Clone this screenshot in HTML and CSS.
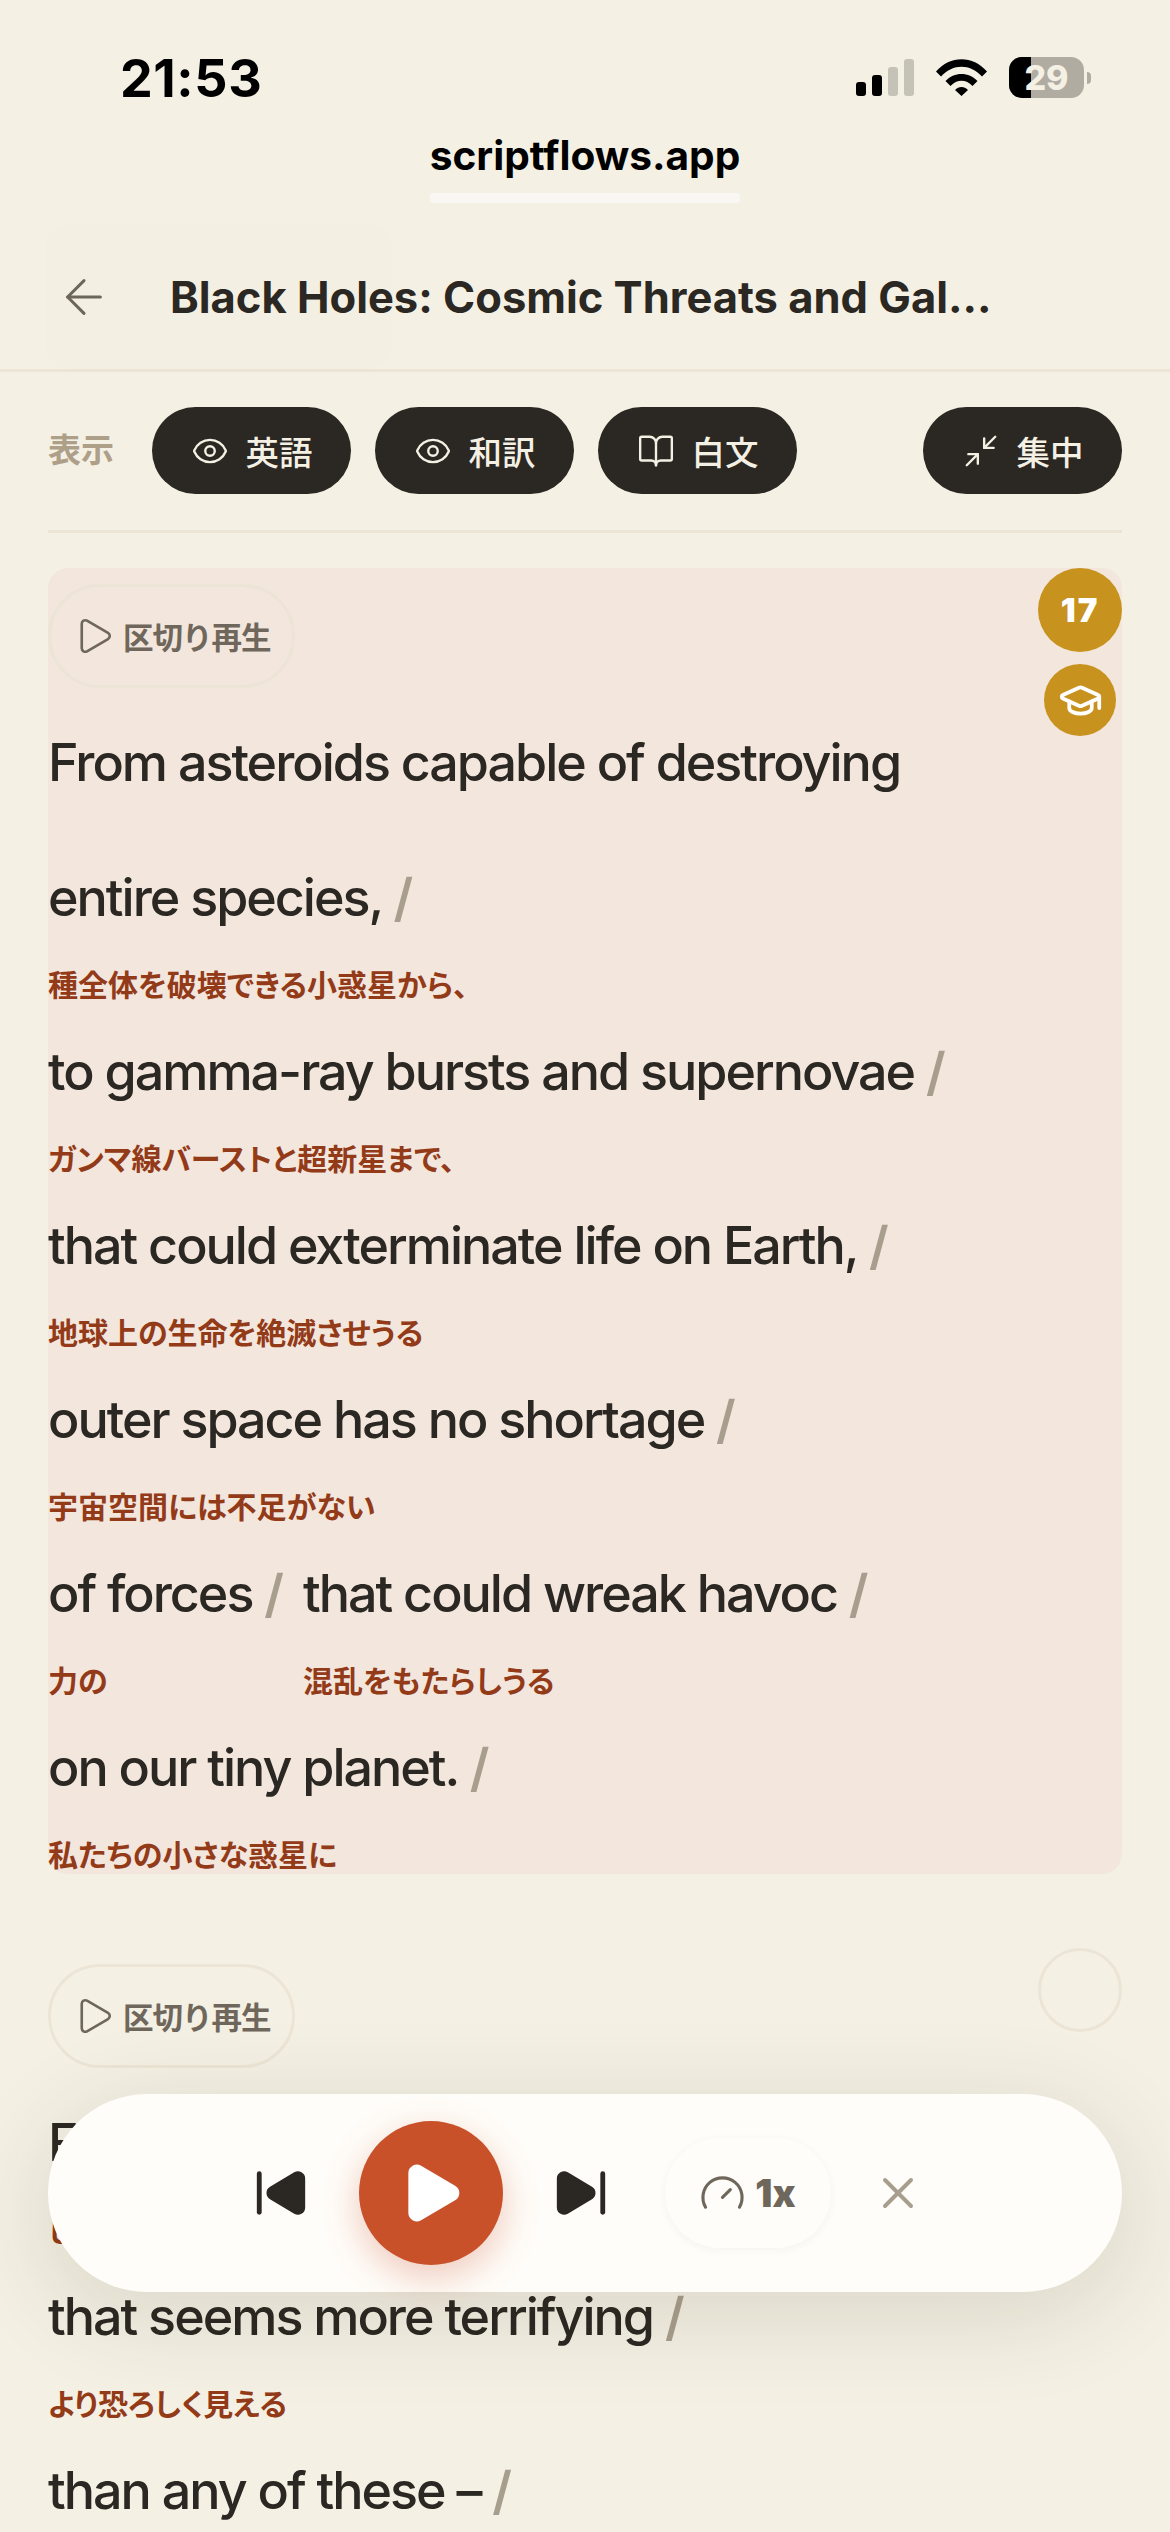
FILE: index.html
```html
<!DOCTYPE html>
<html lang="ja">
<head>
<meta charset="utf-8">
<title>scriptflows.app</title>
<link rel="stylesheet" href="styles.css">
</head>
<body>
<div class="screen">
  <div class="status">
    <span class="time">21:53</span>
    <div class="status-icons">
      <div class="signal"><i class="b1"></i><i class="b2"></i><i class="b3"></i><i class="b4"></i></div>
      <svg class="wifi" viewBox="0 0 51 37"><path d="M0 12.5 C14 -4 37 -4 51 12.5 L46 17.5 C34 4.5 17 4.5 5 17.5Z M9.500 22 C18 12.500 33 12.500 41.500 22 L36.500 27 C30 20 21 20 14.500 27Z M19 31 C22.500 27 28.500 27 32 31 L25.500 37Z" fill="#000"/></svg>
      <div class="battery"><div class="battery-fill"></div><span class="battery-num">29</span></div><div class="battery-tip"></div>
    </div>
  </div>
  <div class="url"><span class="url-text">scriptflows.app</span><span class="url-bar"></span></div>
  <header class="head">
    <svg class="back" viewBox="0 0 24 24"><path d="m12 19-7-7 7-7"/><path d="M19 12H5"/></svg>
    <h1 class="title">Black Holes: Cosmic Threats and Gal...</h1>
  </header>
  <div class="tools-wrap">
    <div class="tools">
      <span class="tools-label">表示</span>
      <button class="pill"><svg class="ic" viewBox="0 0 24 24"><path d="M2.062 12.348a1 1 0 0 1 0-.696 10.75 10.75 0 0 1 19.876 0 1 1 0 0 1 0 .696 10.75 10.75 0 0 1-19.876 0"/><circle cx="12" cy="12" r="3"/></svg>英語</button>
      <button class="pill"><svg class="ic" viewBox="0 0 24 24"><path d="M2.062 12.348a1 1 0 0 1 0-.696 10.75 10.75 0 0 1 19.876 0 1 1 0 0 1 0 .696 10.75 10.75 0 0 1-19.876 0"/><circle cx="12" cy="12" r="3"/></svg>和訳</button>
      <button class="pill"><svg class="ic" viewBox="0 0 24 24"><path d="M12 7v14"/><path d="M3 18a1 1 0 0 1-1-1V4a1 1 0 0 1 1-1h5a4 4 0 0 1 4 4 4 4 0 0 1 4-4h5a1 1 0 0 1 1 1v13a1 1 0 0 1-1 1h-6a3 3 0 0 0-3 3 3 3 0 0 0-3-3z"/></svg>白文</button>
      <button class="pill pill-end"><svg class="ic" viewBox="0 0 24 24"><path d="m14 10 7-7"/><path d="M20 10h-6V4"/><path d="m3 21 7-7"/><path d="M4 14h6v6"/></svg>集中</button>
    </div>
  </div>
  <section class="block active">
    <div class="badges">
      <span class="badge-num">17</span>
      <span class="badge-cap"><svg viewBox="0 0 24 24"><path d="M21.420 10.922a1 1 0 0 0-.019-1.838L12.830 5.180a2 2 0 0 0-1.660 0L2.600 9.080a1 1 0 0 0 0 1.832l8.570 3.908a2 2 0 0 0 1.660 0z"/><path d="M22 10v6"/><path d="M6 12.500V16a6 3 0 0 0 12 0v-3.500"/></svg></span>
    </div>
    <button class="replay"><svg viewBox="0 0 24 24"><path d="M5 5a2 2 0 0 1 3.008-1.728l11.997 6.998a2 2 0 0 1 .003 3.458l-12 7A2 2 0 0 1 5 19z"/></svg>区切り再生</button>
    <div class="flow">
      <div class="seg"><p class="en">From asteroids capable of destroying<br>entire species, <em>/</em></p><p class="ja">種全体を破壊できる小惑星から、</p></div>
      <div class="seg full"><p class="en">to gamma-ray bursts and supernovae <em>/</em></p><p class="ja">ガンマ線バーストと超新星まで、</p></div>
      <div class="seg full"><p class="en">that could exterminate life on Earth, <em>/</em></p><p class="ja">地球上の生命を絶滅させうる</p></div>
      <div class="seg full"><p class="en">outer space has no shortage <em>/</em></p><p class="ja">宇宙空間には不足がない</p></div>
      <div class="seg"><p class="en">of forces <em>/</em></p><p class="ja">力の</p></div>
      <div class="seg"><p class="en">that could wreak havoc <em>/</em></p><p class="ja">混乱をもたらしうる</p></div>
      <div class="seg full"><p class="en">on our tiny planet. <em>/</em></p><p class="ja">私たちの小さな惑星に</p></div>
    </div>
  </section>
  <section class="block next">
    <div class="badges"><span class="badge-empty"></span></div>
    <button class="replay"><svg viewBox="0 0 24 24"><path d="M5 5a2 2 0 0 1 3.008-1.728l11.997 6.998a2 2 0 0 1 .003 3.458l-12 7A2 2 0 0 1 5 19z"/></svg>区切り再生</button>
    <div class="flow">
      <div class="seg full"><p class="en">For there is one thing <em>/</em></p><p class="ja">しかし一つのものがある</p></div>
      <div class="seg full"><p class="en">that seems more terrifying <em>/</em></p><p class="ja">より恐ろしく見える</p></div>
      <div class="seg full"><p class="en">than any of these – <em>/</em></p></div>
    </div>
  </section>
  <div class="player">
    <svg class="skip" viewBox="0 0 24 24"><path d="M17.971 4.285A2 2 0 0 1 21 6v12a2 2 0 0 1-3.029 1.715l-9.997-5.998a2 2 0 0 1-.003-3.432z"/><path d="M3 20V4"/></svg>
    <button class="play"><svg viewBox="0 0 24 24"><path d="M5 5a2 2 0 0 1 3.008-1.728l11.997 6.998a2 2 0 0 1 .003 3.458l-12 7A2 2 0 0 1 5 19z"/></svg></button>
    <svg class="skip" viewBox="0 0 24 24"><path d="M21 4v16"/><path d="M6.029 4.285A2 2 0 0 0 3 6v12a2 2 0 0 0 3.029 1.715l9.997-5.998a2 2 0 0 0 .003-3.432z"/></svg>
    <button class="speed"><svg viewBox="0 0 24 24"><path d="m12 14 4-4"/><path d="M3.340 19a10 10 0 1 1 17.320 0"/></svg>1x</button>
    <svg class="close" viewBox="0 0 24 24"><path d="M18 6 6 18"/><path d="m6 6 12 12"/></svg>
  </div>
</div>
</body>
</html>
```
FILE: styles.css
```css
* { box-sizing: border-box; }
html, body { margin: 0; padding: 0; }
body { background: #f4f0e4; font-family: Inter, "Noto Sans CJK JP", sans-serif; color: #2b2722; }
.screen { position: relative; width: 1170px; height: 2532px; overflow: hidden; background: #f4f0e4; }
button { font-family: inherit; border: 0; margin: 0; padding: 0; }
p { margin: 0; }

.status { height: 134px; padding: 54px 79px 0 120px; display: flex; justify-content: space-between; align-items: flex-start; }
.time { font-size: 52px; line-height: 50px; font-weight: 700; letter-spacing: 0.6px; color: #000; }
.status-icons { display: flex; align-items: flex-start; padding-top: 5px; }
.signal { display: flex; align-items: flex-end; gap: 6px; width: 58px; height: 37px; margin-right: 22px; }
.signal i { display: block; width: 10px; border-radius: 3px; background: #000; }
.signal .b1 { height: 14px; }
.signal .b2 { height: 21px; }
.signal .b3 { height: 29px; background: #c5c2b7; }
.signal .b4 { height: 37px; background: #c5c2b7; }
.wifi { width: 51px; height: 37px; margin-right: 22px; }
.battery { position: relative; width: 75px; height: 41px; border-radius: 13px; background: #b0aca2; overflow: hidden; margin-top: -2px; display: flex; align-items: center; justify-content: center; }
.battery-fill { position: absolute; left: 0; top: 0; bottom: 0; width: 22px; background: #000; }
.battery-num { position: relative; font-size: 34px; font-weight: 800; color: #f4f0e4; line-height: 41px; }
.battery-tip { width: 4px; height: 12px; margin: 13px 0 0 3px; background: #b0aca2; border-radius: 0 6px 6px 0; }

.url { height: 91px; display: flex; flex-direction: column; align-items: center; margin-top: -1px; }
.url-text { font-size: 40.6px; line-height: 46px; font-weight: 700; color: #000; }
.url-bar { width: 310px; height: 10px; margin-top: 14px; border-radius: 3px; background: #f8f7f3; }

.head { position: relative; height: 148px; display: flex; align-items: center; padding: 0 0 0 56px; border-bottom: 3px solid #ece5d5; }
.head::before { content: ""; position: absolute; left: 46px; top: 0; width: 346px; height: 145px; border-radius: 24px; background: rgba(236, 229, 213, .04); }
.back { position: relative; width: 56px; height: 56px; fill: none; stroke: #6d665b; stroke-width: 1.3; stroke-linecap: round; stroke-linejoin: round; margin-right: 58px; flex: none; }
.title { position: relative; margin: 0; font-size: 43.5px; line-height: 50px; font-weight: 700; color: #2b2722; white-space: nowrap; }

.tools-wrap { padding: 36px 48px 0; }
.tools { display: flex; align-items: center; gap: 24px; height: 125px; padding-bottom: 37px; border-bottom: 3px solid #ece5d5; }
.tools-label { width: 80px; font-size: 33px; font-weight: 700; color: #ae9f89; line-height: 87px; white-space: nowrap; }
.pill { display: flex; align-items: center; justify-content: center; gap: 17px; width: 199px; height: 87px; border-radius: 44px; background: #2b2722; color: #f4f0e4; font-size: 33.500px; font-weight: 500; flex: none; }
.pill-end { margin-left: auto; }
.ic { width: 38px; height: 38px; fill: none; stroke: #f4f0e4; stroke-width: 1.5; stroke-linecap: round; stroke-linejoin: round; }

.block { position: relative; margin: 0 48px; }
.block.active { margin-top: 35px; padding-top: 16px; background: #f2e6dd; border-radius: 20px; height: 1306px; }
.block.next { margin-top: 74px; padding-top: 16px; }
.replay { display: flex; align-items: center; gap: 8px; width: 247px; height: 104px; padding-left: 22px; border: 3px solid #ece5d5; border-radius: 52px; background: transparent; color: #6f675c; font-size: 30.500px; letter-spacing: -1px; font-weight: 700; }
.replay svg { width: 42px; height: 42px; fill: none; stroke: #6f675c; stroke-width: 1.5; stroke-linecap: round; stroke-linejoin: round; flex: none; }

.flow { display: flex; flex-wrap: wrap; column-gap: 21px; margin-top: 7px; }
.seg { display: flex; flex-direction: column; }
.seg.full { flex: 0 0 100%; }
.en { font-size: 52px; line-height: 135px; font-weight: 500; letter-spacing: -2px; color: #2b2722; white-space: nowrap; }
.en em { font-style: normal; font-weight: 600; color: #a89e8e; }
.ja { font-size: 30px; line-height: 37px; padding-top: 2px; font-weight: 700; font-feature-settings: "palt"; color: #933a18; white-space: nowrap; }

.badges { position: absolute; right: 0; top: 0; width: 84px; display: flex; flex-direction: column; align-items: center; gap: 12px; }
.badge-num { width: 84px; height: 84px; border-radius: 50%; background: #c8921e; color: #fff; font-size: 33px; font-weight: 900; display: flex; align-items: center; justify-content: center; letter-spacing: 2px; }
.badge-cap { width: 72px; height: 72px; border-radius: 50%; background: #c8921e; display: flex; align-items: center; justify-content: center; }
.badge-cap svg { width: 45px; height: 45px; fill: none; stroke: #fff; stroke-width: 2; stroke-linecap: round; stroke-linejoin: round; }
.badge-empty { width: 84px; height: 84px; border-radius: 50%; border: 3px solid #ece5d5; }

.player { position: absolute; left: 48px; top: 2094px; width: 1074px; height: 198px; padding-left: 5px; border-radius: 99px; background: #fffdf9; display: flex; align-items: center; justify-content: center; gap: 49px; box-shadow: 0 20px 100px rgba(60, 50, 30, .14); }
.skip { width: 58px; height: 58px; fill: #2b2722; stroke: #2b2722; stroke-width: 2; stroke-linecap: round; stroke-linejoin: round; flex: none; }
.play { width: 144px; height: 144px; border-radius: 50%; background: #c8512a; display: flex; align-items: center; justify-content: center; box-shadow: 0 12px 36px rgba(200, 81, 42, .3); flex: none; }
.play svg { width: 68px; height: 68px; fill: #fff; stroke: #fff; stroke-width: 2; stroke-linejoin: round; }
.speed { width: 166px; height: 110px; border-radius: 55px; background: #fffdf9; box-shadow: 0 2px 8px rgba(60, 50, 30, .05); display: flex; align-items: center; justify-content: center; gap: 9px; font-size: 38px; font-weight: 900; color: #6f675c; margin-left: 6px; flex: none; }
.speed svg { width: 47px; height: 47px; fill: none; stroke: #6f675c; stroke-width: 1.6; stroke-linecap: round; stroke-linejoin: round; }
.close { width: 52px; height: 52px; margin-left: -8px; fill: none; stroke: #a89e8e; stroke-width: 1.8; stroke-linecap: round; stroke-linejoin: round; flex: none; }
```
